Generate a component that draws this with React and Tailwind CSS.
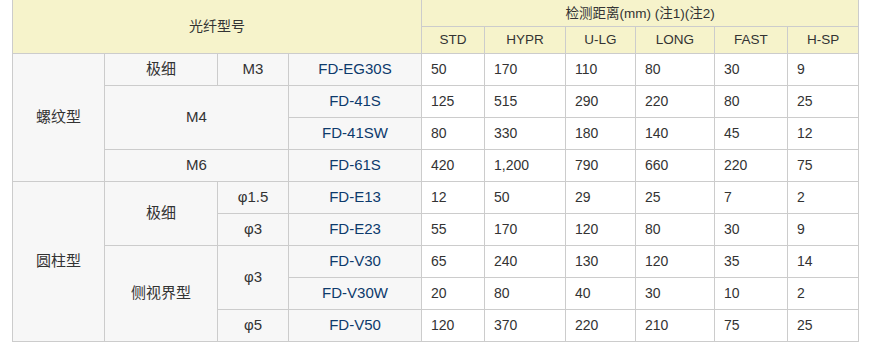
import React from 'react';

const rows = [
    { lead: [{ t: '螺纹型', rs: 4, cls: 'cjk' }, { t: '极细', cls: 'cjk' }, { t: 'M3' }], model: 'FD-EG30S', v: ['50', '170', '110', '80', '30', '9'] },
    { lead: [{ t: 'M4', rs: 2, cs: 2 }], model: 'FD-41S', v: ['125', '515', '290', '220', '80', '25'] },
    { lead: [], model: 'FD-41SW', v: ['80', '330', '180', '140', '45', '12'] },
    { lead: [{ t: 'M6', cs: 2 }], model: 'FD-61S', v: ['420', '1,200', '790', '660', '220', '75'] },
    { lead: [{ t: '圆柱型', rs: 5, cls: 'cjk' }, { t: '极细', rs: 2, cls: 'cjk' }, { t: 'φ1.5' }], model: 'FD-E13', v: ['12', '50', '29', '25', '7', '2'] },
    { lead: [{ t: 'φ3' }], model: 'FD-E23', v: ['55', '170', '120', '80', '30', '9'] },
    { lead: [{ t: '侧视界型', rs: 3, cls: 'cjk' }, { t: 'φ3', rs: 2 }], model: 'FD-V30', v: ['65', '240', '130', '120', '35', '14'] },
    { lead: [], model: 'FD-V30W', v: ['20', '80', '40', '30', '10', '2'] },
    { lead: [{ t: 'φ5' }], model: 'FD-V50', v: ['120', '370', '220', '210', '75', '25'] },
];

const heads = ['STD', 'HYPR', 'U-LG', 'LONG', 'FAST', 'H-SP'];
const widths = [92, 113, 71, 133, 63, 81, 70, 79, 73, 71];

export default function App() {
    return (
        <div className="w-[873px] h-[358px] bg-white overflow-hidden pl-[12px] font-['Liberation_Sans','Noto_Sans_CJK_SC',sans-serif] text-[#333]">
            <table className="-mt-px w-[847px] table-fixed border-collapse">
                <colgroup>
                    {widths.map((w, i) => (
                        <col key={i} style={{ width: w }} />
                    ))}
                </colgroup>
                <thead>
                    <tr className="h-[27px]">
                        <th colSpan={4} rowSpan={2} className="border border-[#ccc] bg-[#f6f3cb] text-[14px] font-normal">
                            光纤型号
                        </th>
                        <th colSpan={6} className="border border-[#ccc] bg-[#f6f3cb] text-[13.5px] font-normal pt-[3px] p-0">
                            检测距离(mm) (注1)(注2)
                        </th>
                    </tr>
                    <tr className="h-[27px]">
                        {heads.map((h) => (
                            <th key={h} className="border border-[#ccc] bg-[#f6f3cb] text-[13.5px] font-normal">
                                {h}
                            </th>
                        ))}
                    </tr>
                </thead>
                <tbody>
                    {rows.map((r, i) => (
                        <tr key={i} className="h-[32px]">
                            {r.lead.map((c, j) => (
                                <td
                                    key={j}
                                    rowSpan={c.rs || 1}
                                    colSpan={c.cs || 1}
                                    className="border border-[#ccc] bg-[#f7f7f7] text-center text-[15px] p-0"
                                >
                                    {c.t}
                                </td>
                            ))}
                            <td className="border border-[#ccc] bg-[#f7f7f7] text-center text-[15px] text-[#0d3a6c] p-0">
                                {r.model}
                            </td>
                            {r.v.map((v, k) => (
                                <td key={k} className="border border-[#ccc] bg-white text-[14px] pl-[9px] p-0">
                                    {v}
                                </td>
                            ))}
                        </tr>
                    ))}
                </tbody>
            </table>
        </div>
    );
}
